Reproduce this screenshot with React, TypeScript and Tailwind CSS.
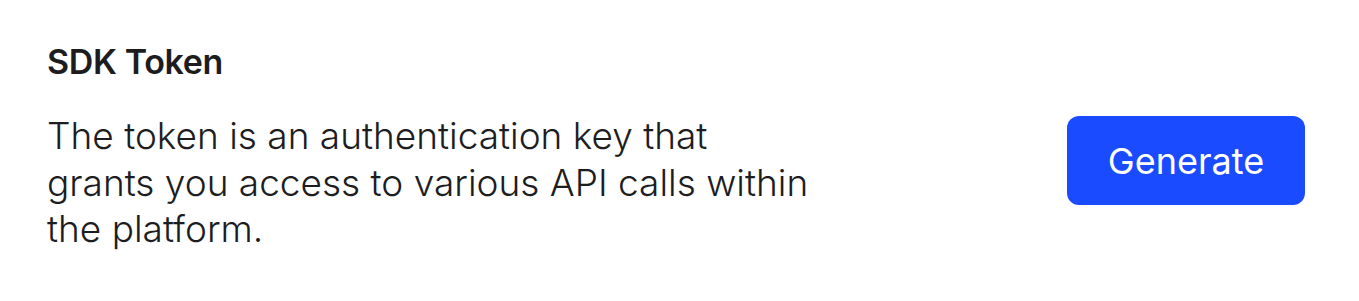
export default function App() {
  return (
    <div
      className="flex h-[301px] w-full items-start justify-between bg-white pl-[47px] pr-[54px] text-[#1d1d1f]"
      style={{ fontFamily: "Inter, 'Noto Sans', sans-serif" }}
    >
      <div className="pt-[40px]">
        <h2 className="text-[34px] font-semibold leading-[44px] tracking-[-0.01em]">SDK Token</h2>
        <p className="mt-[29px] max-w-[765px] text-[37px] font-light leading-[46.5px]">
          The token is an authentication key that grants you access to various API calls within
          the platform.
        </p>
      </div>
      <button className="mt-[116px] h-[89px] w-[238px] shrink-0 rounded-[12px] bg-[#1b4bff] text-[36px] font-normal text-white">
        Generate
      </button>
    </div>
  );
}
